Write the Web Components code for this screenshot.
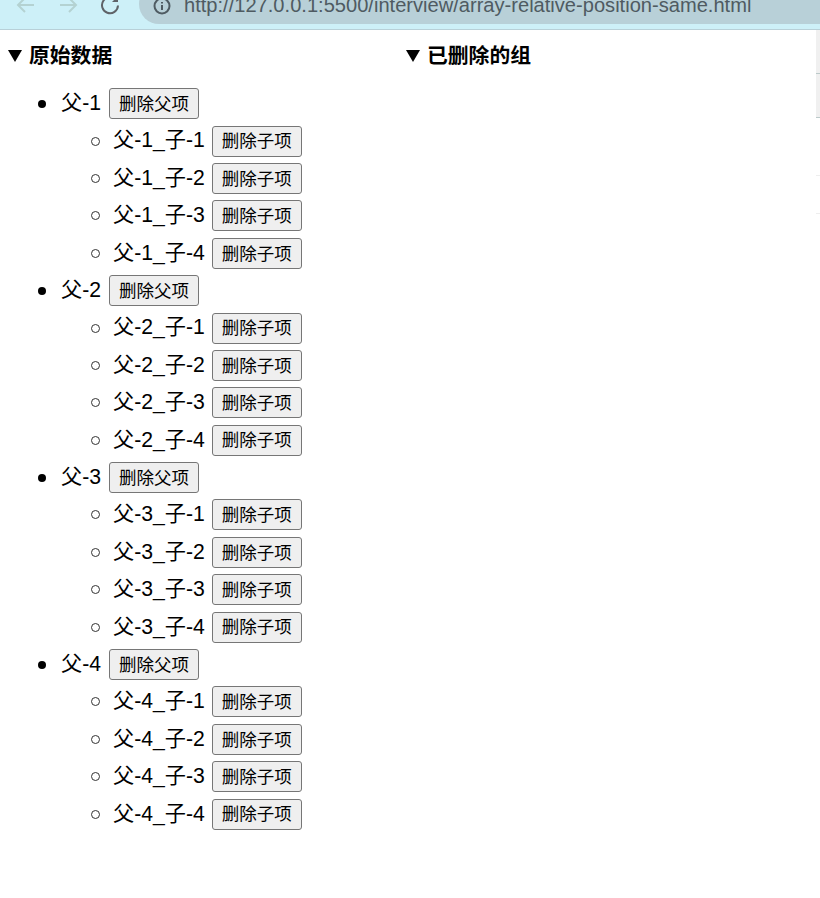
<!DOCTYPE html>
<html>
<head>
<meta charset="utf-8">
<title>array-relative-position-same</title>
<style>
  html, body { margin: 0; padding: 0; background: #fff; }
  body { font-family: "Liberation Sans", "Noto Sans CJK SC", sans-serif; color: #000; position: relative; overflow: hidden; height: 898px; }
</style>
</head>
<body>
<browser-bar url="http://127.0.0.1:5500/interview/array-relative-position-same.html"></browser-bar>
<group-board></group-board>
<edge-strip></edge-strip>

<script>
const barTemplate = document.createElement('template');
barTemplate.innerHTML = `
  <style>
    :host {
      display: flex;
      align-items: flex-start;
      height: 29px;
      background: #cdf0f8;
      border-bottom: 1px solid #b8d0d8;
      overflow: hidden;
    }
    svg { display: block; fill: none; stroke-width: 2; flex: none; }
    .back { margin: -5px 0 0 16px; stroke: #b4d2d2; }
    .forward { margin: -5px 0 0 22px; stroke: #b4d2d2; }
    .reload { margin: -5px 0 0 22px; stroke: #5f6368; }
    .pill {
      margin: -16px 0 0 19px;
      flex: 1;
      height: 40px;
      border-radius: 20px 0 0 20px;
      background: #b8d0d8;
      display: flex;
      align-items: center;
      padding: 3px 0 0 14px;
      box-sizing: border-box;
      color: #4f5b62;
      font: 20.1px/1 "Liberation Sans", sans-serif;
      white-space: nowrap;
    }
    .pill svg { margin-right: 13px; stroke: #4f5b62; }
  </style>
  <svg class="back" width="20" height="20" viewBox="0 0 20 20"><path d="M18 10H2M9 3l-7 7 7 7"/></svg>
  <svg class="forward" width="20" height="20" viewBox="0 0 20 20"><path d="M2 10h16M11 3l7 7-7 7"/></svg>
  <svg class="reload" width="20" height="20" viewBox="0 0 20 20"><path d="M16.5 5.5A8 8 0 1 0 18 10.5"/><path d="M18 1v6h-6z" fill="#5f6368" stroke="none"/></svg>
  <div class="pill">
    <svg width="18" height="18" viewBox="0 0 18 18"><circle cx="9" cy="9" r="7.5"/><path d="M9 8v5M9 5v1.6"/></svg>
    <span id="url"></span>
  </div>
`;

class BrowserBar extends HTMLElement {
  constructor() {
    super();
    this.attachShadow({ mode: 'open' });
    this.shadowRoot.appendChild(barTemplate.content.cloneNode(true));
    this.shadowRoot.getElementById('url').textContent = this.getAttribute('url');
  }
}
customElements.define('browser-bar', BrowserBar);

// sliver of another window at the right edge of the screenshot
const stripTemplate = document.createElement('template');
stripTemplate.innerHTML = `
  <style>
    :host { position: absolute; top: 30px; right: 0; width: 4px; display: block; }
    .a { height: 43px; background: #f0f0f0; border-bottom: 1px solid #bccaca; }
    .b { height: 43px; background: #f0f0f0; border-bottom: 1px solid #bccaca; }
    .c { height: 57px; border-bottom: 1px solid #eee; }
    .d { height: 37px; border-bottom: 1px solid #eee; }
  </style>
  <div class="a"></div><div class="b"></div><div class="c"></div><div class="d"></div>
`;

class EdgeStrip extends HTMLElement {
  constructor() {
    super();
    this.attachShadow({ mode: 'open' });
    this.shadowRoot.appendChild(stripTemplate.content.cloneNode(true));
  }
}
customElements.define('edge-strip', EdgeStrip);

const btnTemplate = document.createElement('template');
btnTemplate.innerHTML = `
  <style>
    :host { display: inline-block; margin-left: 7px; }
    button {
      display: block;
      box-sizing: border-box;
      width: 90px;
      height: 31px;
      padding: 0 0 2px;
      background: #efefef;
      border: 1.25px solid #767676;
      border-radius: 3px;
      color: #000;
      font: 17.5px/1 "Noto Sans CJK SC", sans-serif;
    }
  </style>
  <button><slot></slot></button>
`;

class RemoveButton extends HTMLElement {
  constructor() {
    super();
    this.attachShadow({ mode: 'open' });
    this.shadowRoot.appendChild(btnTemplate.content.cloneNode(true));
  }
}
customElements.define('remove-button', RemoveButton);

const itemTemplate = document.createElement('template');
itemTemplate.innerHTML = `
  <style>
    :host {
      display: flex;
      align-items: center;
      height: 37.4px;
      position: relative;
      font: 21.2px/1 "Liberation Sans", "Noto Sans CJK SC", sans-serif;
    }
    .dot {
      position: absolute;
      left: -23px;
      top: 50%;
      box-sizing: border-box;
      width: 8px;
      height: 8px;
      margin-top: -4px;
      border-radius: 50%;
      background: #000;
    }
    :host([child]) .dot { left: -22.5px; width: 9px; height: 9px; margin-top: -4.5px; background: transparent; border: 1.5px solid #333; }
    :host(:not([child])) remove-button { margin-left: 8px; }
    .label { white-space: pre; position: relative; top: -1px; }
  </style>
  <span class="dot"></span>
  <span class="label"><slot name="label"></slot></span>
  <remove-button><slot name="action"></slot></remove-button>
`;

class TreeItem extends HTMLElement {
  constructor() {
    super();
    this.attachShadow({ mode: 'open' });
    this.shadowRoot.appendChild(itemTemplate.content.cloneNode(true));
  }
}
customElements.define('tree-item', TreeItem);

const panelTemplate = document.createElement('template');
panelTemplate.innerHTML = `
  <style>
    :host { display: block; }
    .head {
      display: flex;
      align-items: center;
      height: 23px;
      font: bold 20.8px/23px "Liberation Sans", "Noto Sans CJK SC", sans-serif;
    }
    .arrow {
      width: 0;
      height: 0;
      margin-right: 7px;
      border-left: 7px solid transparent;
      border-right: 7px solid transparent;
      border-top: 12px solid #000;
    }
  </style>
  <div class="head"><span class="arrow"></span><slot name="title"></slot></div>
  <slot></slot>
`;

class CollapsePanel extends HTMLElement {
  constructor() {
    super();
    this.attachShadow({ mode: 'open' });
    this.shadowRoot.appendChild(panelTemplate.content.cloneNode(true));
  }
}
customElements.define('collapse-panel', CollapsePanel);

const boardTemplate = document.createElement('template');
boardTemplate.innerHTML = `
  <style>
    :host {
      display: grid;
      grid-template-columns: 398px 400px;
      padding: 14px 0 0 8px;
    }
    .tree { padding: 18px 0 0 53px; }
    .sub { padding-left: 52px; }
  </style>
  <collapse-panel>
    <span slot="title">原始数据</span>
    <div class="tree" id="tree"></div>
  </collapse-panel>
  <collapse-panel>
    <span slot="title">已删除的组</span>
  </collapse-panel>
`;

class GroupBoard extends HTMLElement {
  constructor() {
    super();
    this.attachShadow({ mode: 'open' });
    this.shadowRoot.appendChild(boardTemplate.content.cloneNode(true));
    const tree = this.shadowRoot.getElementById('tree');
    for (let p = 1; p <= 4; p++) {
      tree.appendChild(this.makeItem(`父-${p}`, '删除父项', false));
      const sub = document.createElement('div');
      sub.className = 'sub';
      for (let c = 1; c <= 4; c++) {
        sub.appendChild(this.makeItem(`父-${p}_子-${c}`, '删除子项', true));
      }
      tree.appendChild(sub);
    }
  }

  makeItem(label, action, child) {
    const item = document.createElement('tree-item');
    if (child) item.setAttribute('child', '');
    const text = document.createElement('span');
    text.slot = 'label';
    text.textContent = label;
    const btn = document.createElement('span');
    btn.slot = 'action';
    btn.textContent = action;
    item.append(text, btn);
    return item;
  }
}
customElements.define('group-board', GroupBoard);
</script>
</body>
</html>
